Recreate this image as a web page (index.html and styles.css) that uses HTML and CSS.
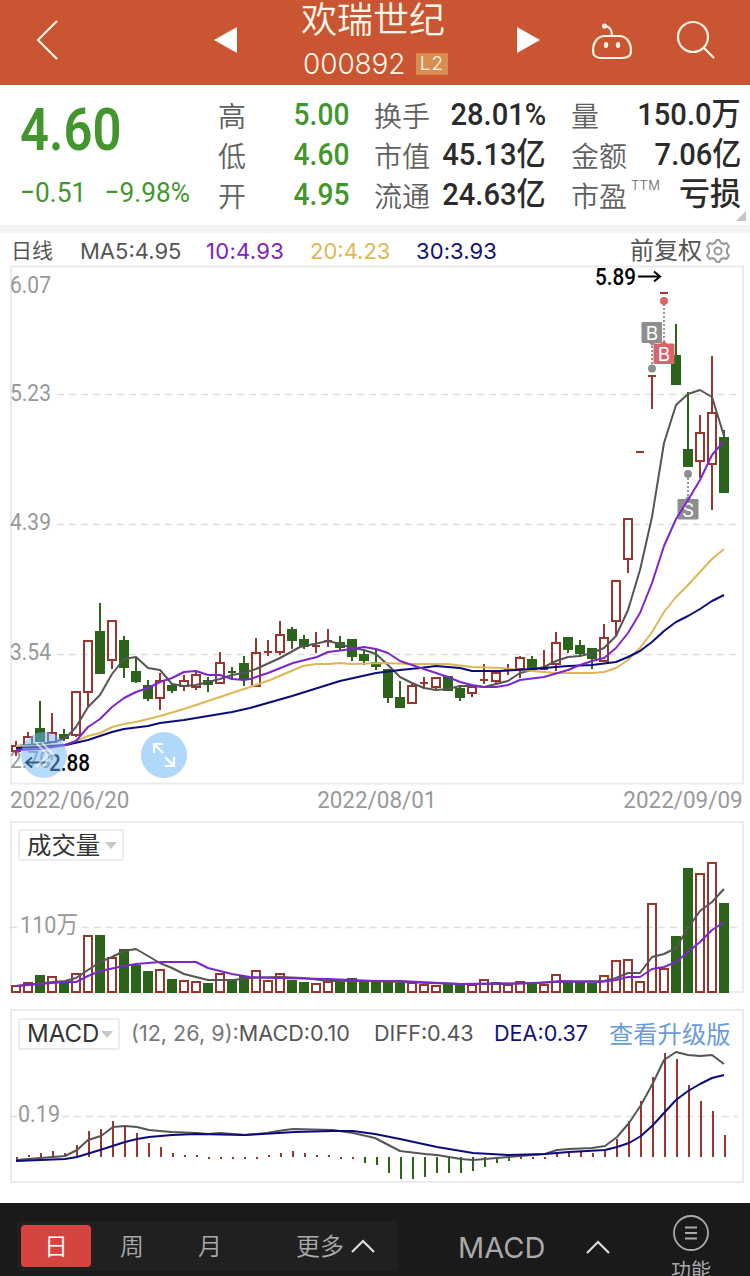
FILE: index.html
```
<!DOCTYPE html>
<html lang="zh-CN">
<head>
    <meta charset="UTF-8">
    <meta name="viewport" content="width=device-width, initial-scale=1.0">
    <title>欢瑞世纪 000892</title>
    <link rel="stylesheet" href="styles.css">
</head>
<body>
    <header class="header">
        <svg class="back" width="24" height="44" viewBox="0 0 24 44"><path d="M22 3L3 22L22 41"/></svg>
        <svg class="prev" width="24" height="26" viewBox="0 0 24 26"><path d="M0 13L23 0V26Z"/></svg>
        <div class="stock">
            <div class="name">欢瑞世纪</div>
            <div class="code"><span class="digits">000892</span><span class="badge">L2</span></div>
        </div>
        <svg class="next" width="24" height="26" viewBox="0 0 24 26"><path d="M24 13L1 0V26Z"/></svg>
        <svg class="robot" width="42" height="40" viewBox="0 0 42 40">
            <circle cx="13.500" cy="4" r="2.600" class="fill"/>
            <path d="M14 4Q21 5 21 13.500M14 14H28C36 14 40 21 40 29Q40 36 31 36H11Q2 36 2 29C2 21 6 14 14 14Z"/>
            <ellipse cx="15" cy="23" rx="2.200" ry="3" class="fill"/>
            <ellipse cx="27" cy="23" rx="2.200" ry="3" class="fill"/>
        </svg>
        <svg class="search" width="40" height="40" viewBox="0 0 40 40"><circle cx="17" cy="17" r="15"/><path d="M27.500 27.500L38 38"/></svg>
    </header>

    <section class="quote">
        <div class="price">
            <div class="last">4.60</div>
            <div class="change"><span>−0.51</span><span>−9.98%</span></div>
        </div>
        <div class="stats">
            <div class="stat"><span>高</span><b class="down">5.00</b></div>
            <div class="stat"><span>换手</span><b>28.01%</b></div>
            <div class="stat"><span>量</span><b>150.0万</b></div>
            <div class="stat"><span>低</span><b class="down">4.60</b></div>
            <div class="stat"><span>市值</span><b>45.13亿</b></div>
            <div class="stat"><span>金额</span><b>7.06亿</b></div>
            <div class="stat"><span>开</span><b class="down">4.95</b></div>
            <div class="stat"><span>流通</span><b>24.63亿</b></div>
            <div class="stat"><span>市盈<sup>TTM</sup></span><b class="loss">亏损</b></div>
        </div>
        <i class="corner"></i>
    </section>

    <div class="legend">
        <span class="period">日线</span>
        <span class="ma5">MA5:4.95</span>
        <span class="ma10">10:4.93</span>
        <span class="ma20">20:4.23</span>
        <span class="ma30">30:3.93</span>
        <span class="adjust">前复权</span>
        <svg class="gear" width="26" height="26" viewBox="0 0 26 26">
            <path d="M10.500 4.500L11.500 2H14.500L15.500 4.500L18.500 6L21.500 5L24 8.500L22 11V15L24 17.500L21.500 21L18.500 20L15.500 21.500L14.500 24H11.500L10.500 21.500L7.500 20L4.500 21L2 17.500L4 15V11L2 8.500L4.500 5L7.500 6Z"/>
            <circle cx="13" cy="13" r="3.600"/>
        </svg>
    </div>

    <div class="panel">
        <svg id="kline" width="750" height="521" viewBox="0 265 750 521">
            <rect class="frame" x="11" y="266.500" width="732" height="517"/>
            <path class="grid" d="M57 394.500H738M57 524.500H738M57 654.500H738"/>
            <g class="axis">
                <text x="10" y="293" textLength="41" lengthAdjust="spacingAndGlyphs">6.07</text>
                <text x="10" y="401" textLength="41" lengthAdjust="spacingAndGlyphs">5.23</text>
                <text x="10" y="530" textLength="41" lengthAdjust="spacingAndGlyphs">4.39</text>
                <text x="10" y="660" textLength="41" lengthAdjust="spacingAndGlyphs">3.54</text>
                <text x="10" y="768" textLength="41" lengthAdjust="spacingAndGlyphs">2.70</text>
            </g>
            <g id="candles"></g>
            <g id="marks">
                <path class="dots" d="M652 346V364M664 304V342M688 478V500"/>
                <circle class="gray" cx="652" cy="368.500" r="4"/>
                <circle class="red" cx="664" cy="301" r="4"/>
                <circle class="gray" cx="688" cy="474" r="4"/>
                <path class="gray" d="M643 322H661Q662 322 662 323V342Q662 343 661 343H655L652 346L649 343H643Q641.500 343 641.500 342V323Q641.500 322 643 322Z"/>
                <path class="red" d="M655 343.500H661L664 340.500L667 343.500H673Q674.500 343.500 674.500 345V362.500Q674.500 364 673 364H655Q653.500 364 653.500 362.500V345Q653.500 343.500 655 343.500Z"/>
                <path class="gray" d="M679 499H685L688 496L691 499H697Q698.500 499 698.500 500V518Q698.500 519.500 697 519.500H679Q677.500 519.500 677.500 518V500Q677.500 499 679 499Z"/>
                <text x="652" y="340">B</text>
                <text x="664" y="361">B</text>
                <text x="688" y="517">S</text>
            </g>
            <g id="klineLines"></g>
            <g class="extreme">
                <text x="595" y="285" textLength="41" lengthAdjust="spacingAndGlyphs">5.89</text>
                <path d="M638 276.500H660M654 271.500L660 276.500L654 281.500"/>
                <text x="49" y="771" textLength="41" lengthAdjust="spacingAndGlyphs">2.88</text>
                <path d="M48 762.500H26M32 757.500L26 762.500L32 767.500"/>
            </g>
            <circle class="bubble" cx="44" cy="755" r="23"/>
            <path class="bubble-icon" d="M36 743L48 755L36 767M42 743L54 755L42 767" opacity=".6"/>
            <circle class="bubble solid" cx="164" cy="755" r="23"/>
            <path class="bubble-icon" d="M154 753V744H163M154 744L163 753M174 757V766H165M174 766L165 757"/>
        </svg>
    </div>
    <div class="dates"><span>2022/06/20</span><span>2022/08/01</span><span>2022/09/09</span></div>

    <div class="panel volume">
        <svg id="volume" width="750" height="174" viewBox="0 821 750 174">
            <rect class="frame" x="11" y="822" width="732" height="170"/>
            <path class="grid" d="M10 927.500H17M82 927.500H738"/>
            <text class="axis" x="20" y="933" textLength="58" lengthAdjust="spacingAndGlyphs">110万</text>
            <g id="volBars"></g>
            <g id="volLines"></g>
        </svg>
        <div class="picker">成交量<i></i></div>
    </div>

    <div class="panel macd">
        <svg id="macd" width="750" height="176" viewBox="0 1008 750 176">
            <rect class="frame" x="11" y="1010" width="732" height="172"/>
            <path class="grid" d="M10 1116.500H17M62 1116.500H738"/>
            <text class="axis" x="18" y="1122" textLength="42" lengthAdjust="spacingAndGlyphs">0.19</text>
            <g id="macdBars"></g>
            <g id="macdLines"></g>
        </svg>
        <div class="picker">MACD<i></i></div>
        <div class="values">
            <span class="macd-value"><em>(12, 26, 9):</em>MACD:0.10</span>
            <span class="diff">DIFF:0.43</span>
            <span class="dea">DEA:0.37</span>
            <a class="upgrade">查看升级版</a>
        </div>
    </div>

    <footer class="toolbar">
        <div class="tabs">
            <span class="active">日</span>
            <span>周</span>
            <span>月</span>
            <span class="more">更多<svg width="24" height="14" viewBox="0 0 24 14"><path d="M1 13L12 2L23 13"/></svg></span>
        </div>
        <div class="indicator">MACD<svg width="24" height="14" viewBox="0 0 24 14"><path d="M1 13L12 2L23 13"/></svg></div>
        <div class="func">
            <svg width="36" height="36" viewBox="0 0 36 36"><circle cx="18" cy="18" r="17"/><path d="M12 12.500H24M12 18H24M12 23.500H24"/></svg>
            <span>功能</span>
        </div>
    </footer>
    <script src="chart.js"></script>
</body>
</html>
```
FILE: styles.css
```
body {
    margin: 0;
    width: 750px;
    height: 1276px;
    overflow: hidden;
    background: #fff;
    color: #555;
    font-family: Inter, "Noto Sans CJK SC", sans-serif;
}

svg {
    display: block;
    flex: none;
    fill: none;
}

.header {
    display: flex;
    box-sizing: border-box;
    height: 85px;
    background: #c95533;
    color: #fff8ea;
}

.header svg {
    stroke: #fff4e2;
    stroke-width: 2.2;
}

.header .fill {
    fill: #fff4e2;
    stroke: none;
}

.header .back {
    margin: 18px 0 0 35px;
}

.header .prev,
.header .next {
    fill: #fff;
    stroke: none;
    margin-top: 27px;
}

.header .prev {
    margin-left: 155px;
}

.header .next {
    margin-left: 65px;
}

.header .robot {
    margin: 22px 0 0 51px;
}

.header .search {
    margin: 20px 0 0 43px;
}

.stock {
    width: 150px;
    margin-left: 63px;
}

.name {
    height: 45px;
    line-height: 40px;
    font-size: 36px;
    font-weight: 350;
    white-space: nowrap;
}

.code {
    display: flex;
    align-items: center;
    gap: 9px;
    height: 37px;
    padding-left: 2px;
    font-size: 28px;
    font-weight: 350;
}

.digits {
    width: 104px;
    letter-spacing: -0.1px;
}

.badge {
    width: 32px;
    height: 22px;
    line-height: 22px;
    background: #d98d4f;
    font-size: 19px;
    letter-spacing: 1px;
    text-align: center;
}

.quote {
    position: relative;
    display: flex;
    box-sizing: border-box;
    height: 148px;
    padding-top: 10px;
    border-bottom: 8px solid #f3f3f3;
}

.price {
    width: 218px;
    color: #43962e;
    font-family: Roboto, sans-serif;
}

.last {
    height: 70px;
    line-height: 70px;
    padding-left: 20px;
    font-size: 59px;
    font-weight: 600;
    transform: scaleX(0.86);
    transform-origin: 20px 0;
}

.change {
    display: flex;
    gap: 20px;
    padding-left: 20px;
    line-height: 56px;
    font-size: 28.5px;
    white-space: nowrap;
    transform: scaleX(0.92);
    transform-origin: 20px 0;
}

.stats {
    display: grid;
    grid-template-columns: 131px 172px 170px;
    grid-auto-rows: 40px;
    column-gap: 25px;
    width: 523px;
}

.stat {
    display: flex;
    justify-content: space-between;
    line-height: 40px;
    white-space: nowrap;
}

.stat span {
    color: #606060;
    font-size: 28px;
    font-weight: 350;
    line-height: 41px;
    font-family: "Noto Sans CJK SC", sans-serif;
}

.stat b {
    color: #2b2b2b;
    font: 500 32px/39px Roboto, "Noto Sans CJK SC", sans-serif;
    transform: scaleX(0.91);
    transform-origin: right;
}

.stat .down {
    color: #43962e;
    transform: scaleX(0.88);
}

.stat .loss {
    transform: scaleX(0.97);
}

.stat sup {
    display: inline-block;
    margin-left: 4px;
    line-height: 14px;
    font-size: 13px;
    font-family: Inter, sans-serif;
    letter-spacing: 0.3px;
    vertical-align: 17px;
}

.corner {
    position: absolute;
    right: 4px;
    bottom: 4px;
    border-left: 10px solid transparent;
    border-bottom: 10px solid #c4c4c4;
}

.legend {
    display: flex;
    align-items: center;
    height: 32px;
    padding-left: 11px;
    font-size: 22px;
    white-space: nowrap;
}

.legend span {
    line-height: 34px;
    padding-top: 3px;
}

.period {
    width: 69px;
    font-size: 21px;
}

.ma5 {
    width: 126px;
}

.ma10 {
    width: 104px;
    color: #7a1fc4;
    letter-spacing: 0.3px;
}

.ma20 {
    width: 106px;
    color: #dcb955;
}

.ma30 {
    width: 214px;
    color: #10107c;
    letter-spacing: 0.1px;
}

.adjust {
    width: 75px;
    font-size: 24px;
}

.gear {
    margin-top: 3px;
    stroke: #999;
    stroke-width: 2;
    stroke-linejoin: round;
}

.panel {
    position: relative;
}

.frame {
    stroke: #ebebeb;
    stroke-width: 2;
}

.grid {
    stroke: #dedede;
    stroke-width: 1.5;
    stroke-dasharray: 7 5;
}

.axis {
    fill: #999;
    font: 24px Roboto, "Noto Sans CJK SC", sans-serif;
}

.up {
    stroke: #98352c;
    stroke-width: 2;
}

.fall {
    fill: #2c641b;
    stroke: #2c641b;
    stroke-width: 2;
}

.line {
    stroke-width: 2;
    stroke-linejoin: round;
}

#marks text {
    fill: #fff;
    font: 19px Inter, sans-serif;
    text-anchor: middle;
}

.gray {
    fill: #8e8e8e;
}

.red {
    fill: #d9656a;
}

.dots {
    stroke: #777;
    stroke-width: 1.5;
    stroke-dasharray: 2 2;
}

.extreme {
    fill: #000;
    font: 500 24px Roboto, sans-serif;
}

.extreme path {
    fill: none;
    stroke: #000;
    stroke-width: 2;
}

.bubble {
    fill: #6db5fa;
    opacity: 0.5;
}

.bubble.solid {
    fill: #b0d8fb;
    opacity: 1;
}

.bubble-icon {
    stroke: #fff;
    stroke-width: 2.2;
}

.dates {
    display: flex;
    justify-content: space-between;
    height: 35px;
    padding: 0 7px 0 10px;
    color: #999;
    font: 24px/29px Roboto, sans-serif;
}

.dates span {
    transform: scaleX(0.935);
}

.dates span:first-child {
    transform-origin: left;
}

.dates span:last-child {
    transform-origin: right;
}

.macd {
    margin-top: 13px;
}

.picker {
    position: absolute;
    left: 18px;
    top: 8px;
    display: flex;
    align-items: center;
    box-sizing: border-box;
    height: 32px;
    padding: 0 5px 0 7px;
    border: 2px solid #ececec;
    border-radius: 3px;
    background: #fff;
    color: #333;
    font-size: 24.4px;
    line-height: 30px;
}

.macd .picker {
    top: 10px;
    font-size: 24px;
}

.picker i {
    margin-left: 5px;
    border: 6.5px solid transparent;
    border-top: 7px solid #c8c8c8;
    border-bottom: 0;
}

.macd .picker i {
    margin-left: 2px;
}

.values {
    position: absolute;
    left: 131px;
    top: 8px;
    display: flex;
    font-size: 21.6px;
    line-height: 34px;
    white-space: nowrap;
}

.values em {
    font-style: normal;
    color: #777;
}

.macd-value {
    width: 243px;
}

.diff {
    width: 120px;
}

.dea {
    width: 115px;
    color: #10107c;
}

.upgrade {
    color: #6a9bdb;
    font-size: 24.3px;
    line-height: 37px;
}

.toolbar {
    display: flex;
    height: 73px;
    margin-top: 19px;
    background: #1a1a1a;
    color: #aaa;
    overflow: hidden;
}

.toolbar svg {
    stroke: #ddd;
    stroke-width: 2.2;
}

.tabs {
    display: flex;
    box-sizing: border-box;
    width: 381px;
    height: 50px;
    margin: 18px 0 0 17px;
    padding: 4px;
    border-radius: 4px;
    background: #202020;
    font-size: 24px;
    font-weight: 350;
    line-height: 43px;
}

.tabs span {
    width: 78px;
    text-align: center;
}

.tabs .active {
    height: 42px;
    width: 70px;
    margin-right: 2px;
    border-radius: 4px;
    background: #d5443f;
    color: #fff;
}

.tabs .more {
    display: flex;
    align-items: center;
    gap: 7px;
    width: auto;
    margin-left: 47px;
}

.indicator {
    display: flex;
    align-items: center;
    width: 213px;
    height: 88px;
    margin-left: 60px;
    gap: 41px;
    font-size: 29px;
}

.func {
    display: flex;
    flex-direction: column;
    align-items: center;
    width: 40px;
    padding-top: 12px;
    font-size: 20px;
    line-height: 40px;
    white-space: nowrap;
}

.func svg {
    stroke: #aaa;
    stroke-width: 1.8;
}
```
FILE: chart.js
```
// r = rise, g = fall; high, body top, body bottom, low
const candles = [
    ['r', 741, 746, 751, 756], ['r', 732, 737, 746, 746], ['g', 701, 729, 741, 741], ['r', 713, 733, 742, 742],
    ['g', 729, 735, 738, 741], ['r', 691, 692, 735, 737], ['r', 641, 641, 692, 708], ['g', 603, 632, 673, 674],
    ['r', 621, 621, 660, 669], ['g', 636, 641, 667, 678], ['g', 657, 672, 681, 683], ['g', 680, 686, 698, 701],
    ['r', 673, 681, 698, 710], ['g', 683, 686, 690, 693], ['r', 675, 681, 686, 691], ['r', 671, 675, 687, 690],
    ['g', 677, 681, 684, 692], ['r', 652, 663, 683, 683], ['g', 667, 672, 672, 680], ['g', 656, 664, 679, 686],
    ['r', 638, 653, 686, 686], ['r', 640, 652, 652, 656], ['r', 621, 635, 652, 655], ['g', 627, 630, 640, 649],
    ['g', 635, 640, 646, 649], ['r', 632, 646, 646, 653], ['r', 629, 641, 641, 647], ['g', 636, 643, 647, 650],
    ['g', 639, 640, 656, 661], ['g', 650, 655, 660, 665], ['g', 649, 663, 666, 670], ['g', 669, 670, 697, 703],
    ['g', 681, 698, 707, 708], ['r', 684, 686, 703, 703], ['r', 677, 683, 683, 689], ['r', 678, 678, 687, 691],
    ['g', 676, 677, 690, 691], ['g', 685, 689, 697, 701], ['r', 687, 687, 693, 697], ['r', 664, 680, 680, 684],
    ['r', 671, 673, 681, 685], ['r', 664, 670, 670, 675], ['r', 656, 658, 669, 678], ['g', 656, 660, 668, 668],
    ['r', 650, 669, 669, 669], ['r', 632, 643, 664, 671], ['g', 637, 638, 649, 653], ['g', 640, 646, 653, 657],
    ['g', 648, 649, 658, 669], ['r', 624, 638, 661, 661], ['r', 581, 581, 621, 636], ['r', 519, 519, 559, 573],
    ['r', 452, 452, 452, 452], ['r', 376, 376, 376, 409], ['r', 293, 293, 293, 293], ['g', 324, 356, 384, 385],
    ['g', 392, 450, 466, 467], ['r', 415, 433, 461, 478], ['r', 356, 413, 464, 510], ['g', 430, 438, 492, 493]
];

const volumeTops = [
    986, 983, 976, 977, 983, 974, 936, 936, 958, 950, 966, 972, 970, 980, 981, 982, 984, 974, 981, 977,
    971, 981, 974, 981, 983, 984, 982, 982, 979, 982, 982, 983, 984, 983, 985, 986, 985, 985, 985, 980,
    983, 985, 982, 983, 985, 975, 982, 982, 984, 976, 961, 960, 982, 904, 969, 937, 869, 874, 863, 904
];

const macd = [
    -1, 2, 4, 6, 4, 12, 26, 28, 36, 30, 24, 14, 10, 4, 2, 2, -1, -1, -1, -1,
    -1, 2, 4, 6, 4, 2, 2, -1, -1, -6, -8, -16, -22, -22, -20, -16, -16, -16, -14, -10,
    -6, -4, -1, -1, -1, 5, 6, 6, 4, 8, 18, 36, 56, 80, 104, 98, 72, 56, 46, 22
];

function xAt(i) {
    return 16 + i * 12;
}

function draw(id, markup) {
    document.getElementById(id).innerHTML += markup;
}

function line(id, color, points) {
    draw(id, `<polyline class="line" stroke="${color}" points="${points}"/>`);
}

candles.forEach(([kind, high, top, bottom, low], i) => {
    const x = xAt(i);
    const cls = kind === 'r' ? 'up' : 'fall';
    let d = `M${x} ${high}V${top}M${x} ${bottom}V${low}`;
    d += top === bottom ? `M${x - 4} ${top}H${x + 4}` : `M${x - 4} ${top}H${x + 4}V${bottom}H${x - 4}Z`;
    draw('candles', `<path class="${cls}" d="${d}"/>`);
    draw('volBars', `<path class="${cls}" d="M${x - 4} ${volumeTops[i]}H${x + 4}V992H${x - 4}Z"/>`);
});

macd.forEach((value, i) => {
    const x = xAt(i) + 1;
    const cls = value < -1 ? 'fall' : 'up';
    const end = value === -1 ? 1159 : 1157 - value;
    draw('macdBars', `<path class="${cls}" d="M${x} 1157V${end}"/>`);
});

const GRAY = '#555', PURPLE = '#7d26cd', YELLOW = '#deb655', NAVY = '#0b0b7c';

line('klineLines', GRAY, '16,746 40,744 54,742 66,738 76,727 88,707 100,695 112,674 124,659 136,657 148,668 160,670 172,684 184,686 196,685 208,682 220,679 232,675 244,673 256,669 280,658 300,647 328,641 340,644 352,648 364,650 376,654 388,665 400,677 412,683 424,688 436,690 448,689 460,686 472,686 484,687 496,684 508,681 520,673 532,670 544,667 556,661 568,657 580,656 592,653 604,648 616,636 628,610 640,570 652,517 664,443 676,405 688,394 700,390 712,397 724,436');
line('klineLines', YELLOW, '16,746 40,746 64,745 76,741 88,736 100,733 112,727 124,724 136,722 160,716 184,709 208,701 220,697 232,693 250,687 270,680 303,666 316,664 328,664 340,663 352,664 383,663 412,664 448,664 472,667 500,668 532,671 556,673 592,673 604,672 616,668 628,660 640,648 652,632 664,612 676,597 688,585 700,572 712,559 724,549');
line('klineLines', NAVY, '16,748 40,747 66,745 88,740 100,736 112,732 124,729 148,726 160,723 184,720 208,716 232,712 250,708 292,696 340,681 376,673 400,670 420,668 436,666 460,668 472,671 500,671 532,669 568,666 592,665 616,662 628,657 640,651 652,642 664,631 676,622 688,616 700,609 712,601 724,595');
line('klineLines', PURPLE, '16,750 40,749 65,745 76,741 88,727 100,719 112,707 124,698 136,692 148,688 160,682 172,678 184,672 196,671 208,675 220,675 232,679 244,680 250,679 268,673 293,663 317,657 328,652 352,649 364,647 376,649 388,653 400,661 412,665 424,669 436,673 448,677 460,682 472,685 484,687 496,687 508,685 520,680 544,677 568,670 580,665 592,661 604,658 616,648 628,633 640,613 652,583 664,546 676,519 688,500 700,480 712,455 724,441');

line('volLines', GRAY, '16,986 53,982 65,981 76,978 88,970 100,962 112,957 124,951 136,949 160,963 172,968 184,974 196,977 208,980 233,980 250,978 280,977 304,978 328,981 375,981 400,982 460,984 508,984 556,982 604,981 616,978 628,973 640,973 652,957 664,954 676,948 688,928 700,911 712,902 724,889');
line('volLines', PURPLE, '16,986 64,982 76,982 88,976 100,971 124,966 136,964 160,962 196,962 208,968 220,971 232,974 250,977 278,978 328,979 375,981 400,981 460,984 540,983 560,981 600,982 616,980 628,977 640,977 652,969 664,967 676,962 688,952 700,942 712,930 724,922');

line('macdLines', GRAY, '16,1160 53,1157 65,1156 77,1150 88,1140 101,1136 113,1127 125,1126 137,1127 149,1130 160,1131 172,1132 197,1133 208,1134 220,1133 245,1135 267,1133 278,1131 293,1129 333,1130 353,1133 375,1138 400,1151 425,1154 437,1155 449,1157 461,1159 473,1160 485,1159 508,1157 545,1154 557,1150 569,1149 592,1148 605,1146 617,1137 629,1123 641,1105 653,1083 664,1060 676,1052 688,1055 700,1056 712,1055 724,1064');
line('macdLines', NAVY, '16,1161 65,1159 77,1157 100,1150 125,1142 137,1139 149,1137 172,1135 197,1134 245,1135 295,1132 333,1131 353,1131 375,1134 400,1139 437,1147 473,1153 508,1155 545,1154 569,1152 605,1150 617,1147 629,1143 641,1136 653,1125 664,1113 676,1100 688,1091 700,1084 712,1078 724,1075');
```
